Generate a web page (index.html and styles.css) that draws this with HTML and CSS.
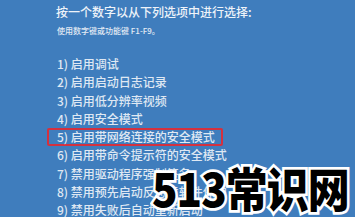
FILE: index.html
```html
<!DOCTYPE html>
<html lang="zh-CN">
<head>
<meta charset="utf-8">
<link rel="stylesheet" href="styles.css">
</head>
<body>
<div class="screen">
  <div class="title">按一个数字以从下列选项中进行选择:</div>
  <div class="sub">使用数字键或功能键 F1-F9。</div>
  <ul class="list">
    <li class="item">1) 启用调试</li>
    <li class="item">2) 启用启动日志记录</li>
    <li class="item">3) 启用低分辨率视频</li>
    <li class="item">4) 启用安全模式</li>
    <li class="item sel">5) 启用带网络连接的安全模式</li>
    <li class="item">6) 启用带命令提示符的安全模式</li>
    <li class="item">7) 禁用驱动程序强制签名</li>
    <li class="item">8) 禁用预先启动反恶意软件保护</li>
    <li class="item">9) 禁用失败后自动重新启动</li>
  </ul>
  <div class="mark">513常识网</div>
</div>
</body>
</html>
```
FILE: styles.css
```css
html, body {
  margin: 0;
  padding: 0;
}
body {
  width: 355px;
  height: 217px;
  overflow: hidden;
  background: #3f7dbd;
  font-family: "Noto Sans CJK SC", "Noto Sans", sans-serif;
  color: #e6edf6;
}
.screen {
  position: relative;
  width: 355px;
  height: 217px;
  padding: 5px 0 0 0;
  box-sizing: border-box;
}
.title {
  margin-left: 56px;
  font-size: 12px;
  line-height: 14px;
  font-weight: 500;
  color: #eef3f9;
}
.sub {
  margin: 7px 0 0 57px;
  font-size: 8px;
  line-height: 10px;
  font-weight: 500;
  color: #e2eaf4;
}
.list {
  list-style: none;
  margin: 19px 0 0 0;
  padding: 0;
}
.item {
  width: fit-content;
  margin-left: 47px;
  padding: 0 6px 0 8px;
  border: 2px solid transparent;
  border-radius: 2px;
  font-size: 12px;
  line-height: 14.3px;
  font-weight: 500;
  color: #dfe8f3;
}
.item.sel {
  border-color: #d3313f;
}
.mark {
  position: absolute;
  left: 152px;
  top: 160px;
  font-size: 42px;
  line-height: 50px;
  font-weight: 900;
  color: #000;
  -webkit-text-stroke: 5px #fff;
  paint-order: stroke fill;
  letter-spacing: -1px;
  transform: scaleY(1.1);
  transform-origin: top left;
}
```
